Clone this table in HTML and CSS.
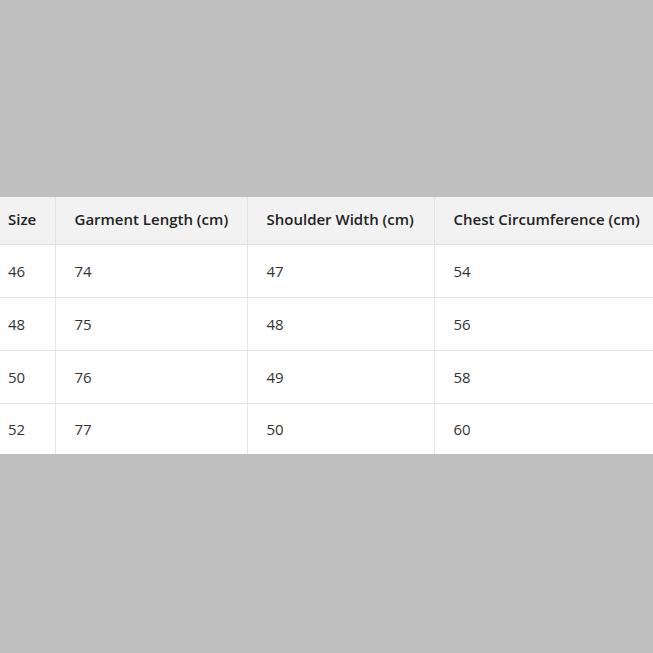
FILE: index.html
```html
<!DOCTYPE html>
<html>
<head>
<meta charset="utf-8">
<link rel="stylesheet" href="styles.css">
</head>
<body>
<div class="page">
  <table class="size-table">
    <colgroup>
      <col class="c1"><col class="c2"><col class="c3"><col class="c4">
    </colgroup>
    <thead>
      <tr><th>Size</th><th>Garment Length (cm)</th><th>Shoulder Width (cm)</th><th>Chest Circumference (cm)</th></tr>
    </thead>
    <tbody>
      <tr><td>46</td><td>74</td><td>47</td><td>54</td></tr>
      <tr><td>48</td><td>75</td><td>48</td><td>56</td></tr>
      <tr><td>50</td><td>76</td><td>49</td><td>58</td></tr>
      <tr><td>52</td><td>77</td><td>50</td><td>60</td></tr>
    </tbody>
  </table>
</div>
</body>
</html>
```
FILE: styles.css
```css
html, body {
  margin: 0;
  padding: 0;
  background: #bfbfbf;
  overflow: hidden;
}
.page {
  width: 653px;
  height: 653px;
  padding-top: 197px;
  box-sizing: border-box;
  overflow: hidden;
}
.size-table {
  margin-left: -11px;
  border-collapse: collapse;
  table-layout: fixed;
  width: 690px;
  background: #fff;
  font-family: "Open Sans", "Noto Sans", sans-serif;
  font-size: 15px;
  color: #333;
}
.c1 { width: 66px; }
.c2 { width: 192px; }
.c3 { width: 187px; }
.c4 { width: 245px; }
.size-table th,
.size-table td {
  text-align: left;
  padding: 0 0 0 19px;
  border-right: 1px solid #e4e4e4;
  border-bottom: 1px solid #e4e4e4;
  white-space: nowrap;
}
.size-table th {
  background: #f2f2f2;
  font-weight: 600;
  color: #222;
  height: 47px;
  padding-bottom: 3px;
  box-sizing: border-box;
}
.size-table td {
  height: 52px;
}
.size-table tbody tr:last-child td {
  border-bottom: none;
  height: 50px;
}
```
